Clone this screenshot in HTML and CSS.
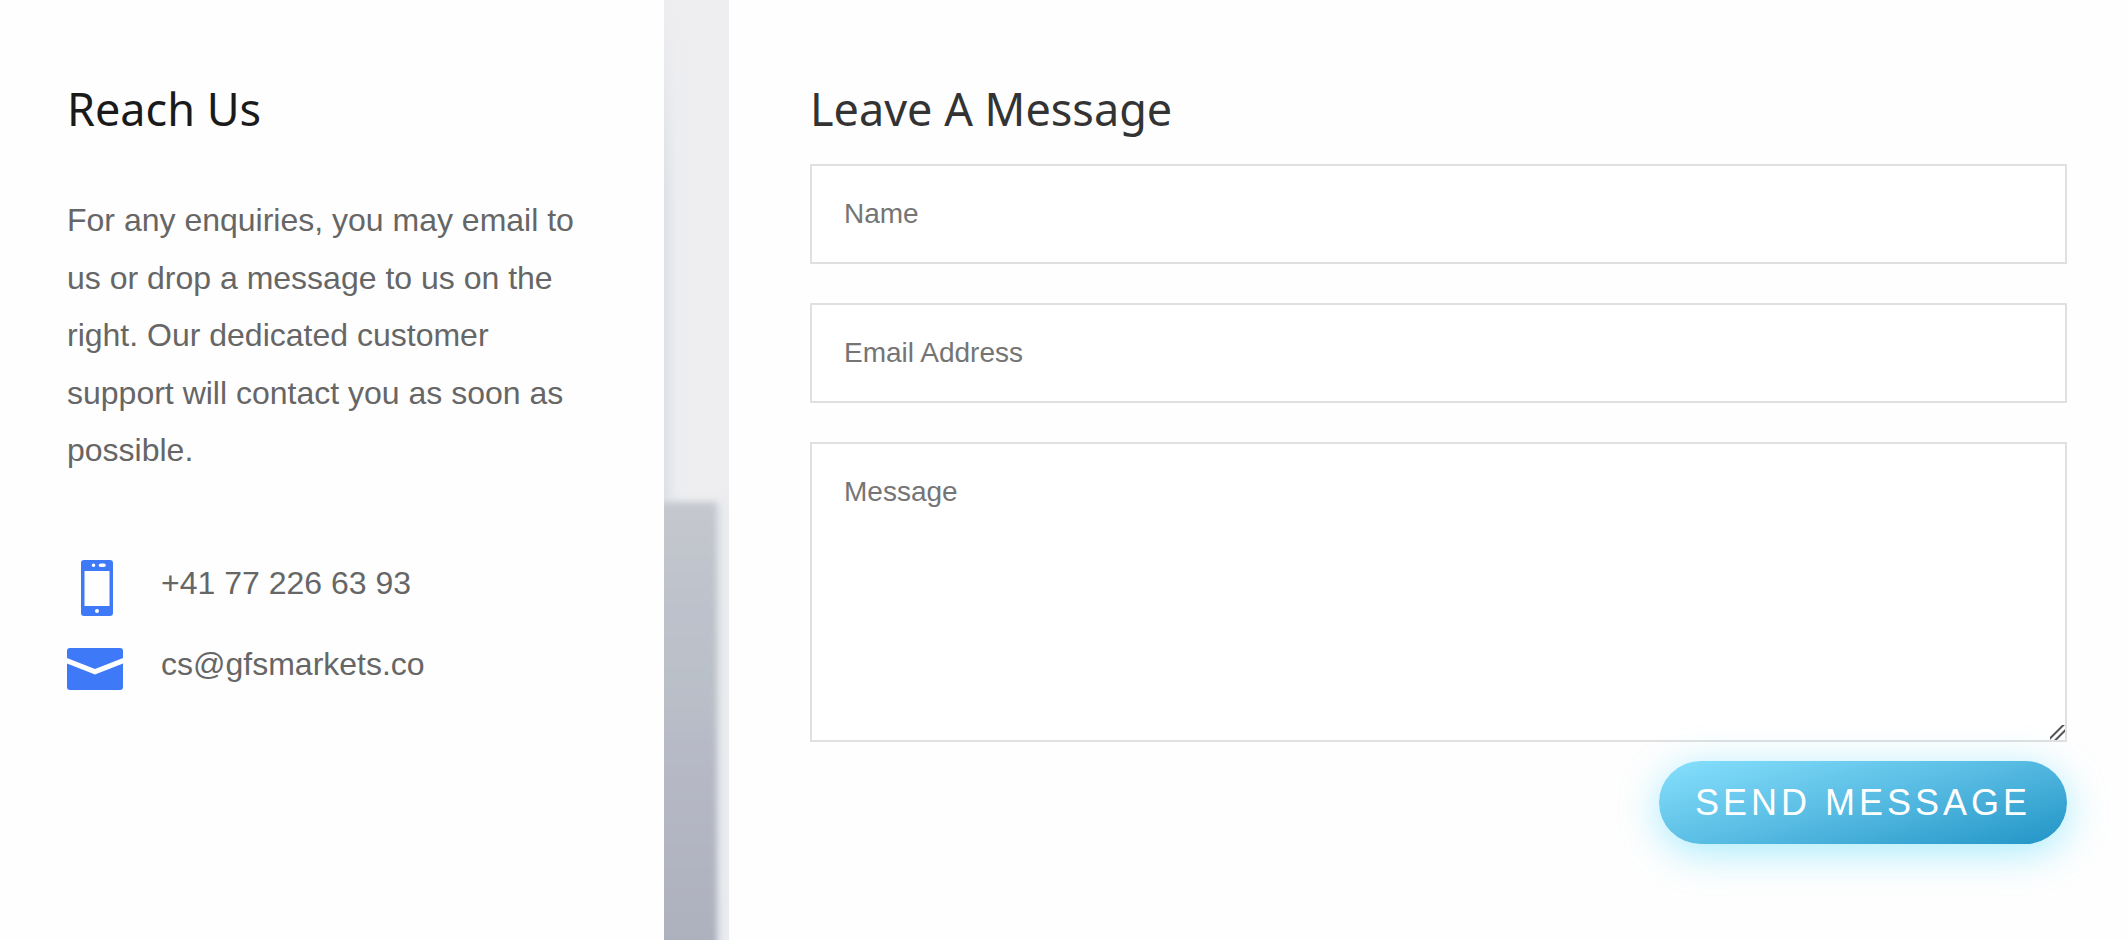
FILE: index.html
```html
<!DOCTYPE html>
<html lang="en">

<head>
	<meta charset="utf-8">
	<meta name="viewport" content="width=device-width, initial-scale=1">
	<title>Contact Us</title>
	<link rel="stylesheet" href="styles.css">
</head>

<body>

	<main class="contact">

		<section class="reach">
			<h2>Reach Us</h2>
			<p class="intro">For any enquiries, you may email to us or drop a message to us on the right. Our dedicated customer support will contact you as soon as possible.</p>

			<ul class="contact-list">
				<li>
					<svg class="icon" viewBox="0 0 56 56" aria-hidden="true">
						<path fill-rule="evenodd" d="M17 0h26a3 3 0 0 1 3 3v50a3 3 0 0 1-3 3H17a3 3 0 0 1-3-3V3a3 3 0 0 1 3-3zM17.500 11v35h25V11zM26.500 3.500a1.800 1.800 0 1 0 0 3.600a1.800 1.800 0 1 0 0-3.600zM33.500 3.500a1.800 1.800 0 0 0 0 3.600h3.500a1.800 1.800 0 0 0 0-3.600zM30 49a2 2 0 1 0 0 4a2 2 0 1 0 0-4z"/>
					</svg>
					<a href="tel:+41772266393">+41 77 226 63 93</a>
				</li>
				<li>
					<svg class="icon" viewBox="0 0 56 56" aria-hidden="true">
						<path d="M3 7h50a3 3 0 0 1 3 3v7L28 28 0 17v-7a3 3 0 0 1 3-3z"/>
						<path d="M0 22.500L28 33.500 56 22.500V46a3 3 0 0 1-3 3H3a3 3 0 0 1-3-3z"/>
					</svg>
					<a href="mailto:cs@gfsmarkets.co">cs@gfsmarkets.co</a>
				</li>
			</ul>
		</section>

		<!-- strip of the background between the two panels -->
		<div class="backdrop"></div>

		<section class="message">
			<h2>Leave A Message</h2>
			<form action="#" method="post">
				<input type="text" name="name" placeholder="Name" aria-label="Name">
				<input type="email" name="email" placeholder="Email Address" aria-label="Email Address">
				<textarea name="message" placeholder="Message" aria-label="Message"></textarea>
				<button type="submit">SEND MESSAGE</button>
			</form>
		</section>

	</main>

</body>

</html>
```
FILE: styles.css
```css
* {
	box-sizing: border-box;
}

body {
	margin: 0;
	background: #fefefe;
	color: #666;
	font-family: "Liberation Sans", Arial, sans-serif;
	font-size: 32px;
	line-height: 1.8;
}

.contact {
	display: grid;
	grid-template-columns: 664fr 65px 1399fr;
	min-height: 100vh;
}

h2 {
	margin: 0;
	font-family: "Noto Sans", "Open Sans", sans-serif;
	font-size: 45px;
	font-weight: 400;
	line-height: 62px;
}

/* left panel */
.reach {
	padding: 78px 67px;
}

.reach h2 {
	color: #1a1a1a;
}

.intro {
	margin: 52px 0 75px;
}

.contact-list {
	display: flex;
	flex-direction: column;
	gap: 20px;
	margin: 0;
	padding: 0;
	list-style: none;
}

.contact-list li {
	display: flex;
	gap: 38px;
}

.contact-list a {
	color: inherit;
	text-decoration: none;
}

.icon {
	width: 56px;
	height: 56px;
	margin-top: 5px;
	fill: #3e79f7;
}

/* blurred office picture */
.backdrop {
	position: relative;
	overflow: hidden;
	background:
		linear-gradient(#eeeef0, rgba(238, 238, 240, 0) 200px),
		linear-gradient(90deg, #dde1e5, #ebedf1 20%, #eeeef0 40%);
}

.backdrop::before {
	content: "";
	position: absolute;
	top: 502px;
	bottom: -10px;
	left: -10px;
	right: 12px;
	background: linear-gradient(#c5c8cd, #bdc1cb 25%, #bac0c8 40%, #b6b8c6 60%, #adb0bd);
	box-shadow: 8px 0 8px #e3e7ea;
	filter: blur(3px);
}

/* right panel */
.message {
	padding: 78px 61px 78px 81px;
}

.message h2 {
	color: #333;
}

form {
	display: flex;
	flex-direction: column;
	gap: 39px;
	margin-top: 24px;
}

input,
textarea {
	width: 100%;
	height: 100px;
	padding: 32px;
	border: 2px solid #e0e0e0;
	border-radius: 0;
	background: #fff;
	color: #666;
	font-family: inherit;
	font-size: 28px;
	line-height: 32px;
}

textarea {
	display: block;
	height: 300px;
	resize: vertical;
}

textarea::-webkit-resizer {
	background: linear-gradient(135deg, transparent 8px, #555 9px, #555 10px, transparent 11px, transparent 13px, #555 14px, #555 15px, transparent 16px);
}

::placeholder {
	color: #757575;
	opacity: 1;
}

button {
	align-self: flex-end;
	height: 83px;
	margin-top: -20px;
	padding: 0 36px;
	border: 0;
	border-radius: 42px;
	background: linear-gradient(165deg, #87e0fd 0%, #53b8e0 55%, #2194c6 100%);
	box-shadow: 0 8px 40px rgba(0, 200, 250, 0.35);
	color: #fff;
	font-family: inherit;
	font-size: 36px;
	letter-spacing: 4px;
	cursor: pointer;
}
```
